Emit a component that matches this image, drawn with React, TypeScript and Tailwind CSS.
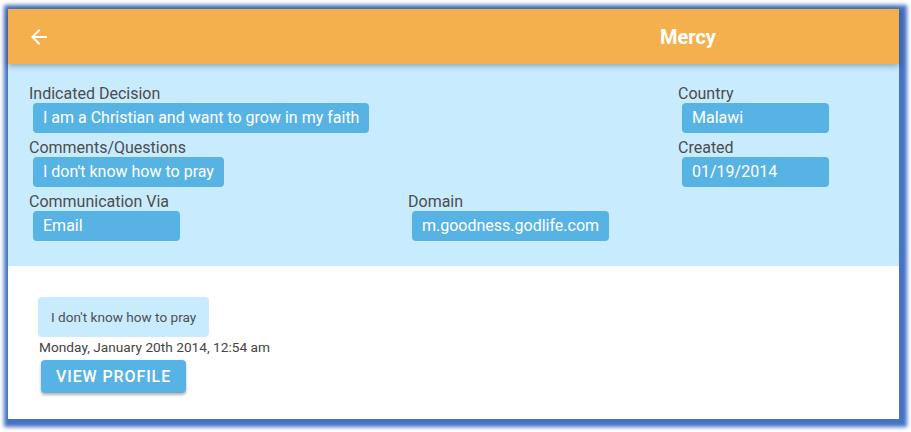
import React from "react";
import { MdArrowBack } from "react-icons/md";

const font = { fontFamily: "Roboto, 'Noto Sans', sans-serif" };

function Field({ label, value, className = "" }: { label: string; value: string; className?: string }) {
  return (
    <div className={`flex flex-col items-start ${className}`}>
      <div className="text-[16px] leading-[19px] text-[#4d4d4d]">{label}</div>
      <div className="ml-[4px] h-[30px] min-w-[147px] rounded-[4px] bg-[#58b3e5] px-[10px] text-[16px] leading-[30px] text-white">
        {value}
      </div>
    </div>
  );
}

export default function App() {
  return (
    <div className="h-[432px] w-[911px] overflow-hidden bg-white" style={font}>
      <div className="ml-[8px] mt-[9px] flex h-[410px] w-[891px] flex-col bg-white shadow-[2px_2px_4px_6px_#4472c4]">
        <div className="relative z-10 flex h-[55px] shrink-0 items-center bg-[#f4b04c] shadow-[0_2px_6px_rgba(0,0,0,0.3)]">
          <MdArrowBack className="ml-[19px] text-white" size={24} />
          <div className="ml-[609px] text-[20px] font-bold text-white">Mercy</div>
        </div>
        <div className="grid grid-cols-[379px_270px_1fr] gap-y-[5px] bg-[#c8ebfd] pb-[25px] pl-[21px] pt-[20px]">
          <Field label="Indicated Decision" value="I am a Christian and want to grow in my faith" />
          <Field className="col-start-3" label="Country" value="Malawi" />
          <Field label="Comments/Questions" value="I don't know how to pray" />
          <Field className="col-start-3" label="Created" value="01/19/2014" />
          <Field label="Communication Via" value="Email" />
          <Field label="Domain" value="m.goodness.godlife.com" />
        </div>
        <div className="flex flex-col items-start pl-[30px] pt-[31px]">
          <div className="h-[40px] rounded-[4px] bg-[#c8ebfd] px-[13px] text-[13.6px] leading-[40px] text-[#505050]">
            I don't know how to pray
          </div>
          <div className="ml-[1px] text-[13.7px] leading-[20px] text-[#444]">Monday, January 20th 2014, 12:54 am</div>
          <button className="ml-[3px] mt-[3px] h-[33px] rounded-[4px] bg-[#58b3e5] px-[15px] text-[16px] font-medium uppercase tracking-[0.9px] text-white shadow-[0_2px_3px_rgba(0,0,0,0.3)]">
            View Profile
          </button>
        </div>
      </div>
    </div>
  );
}
